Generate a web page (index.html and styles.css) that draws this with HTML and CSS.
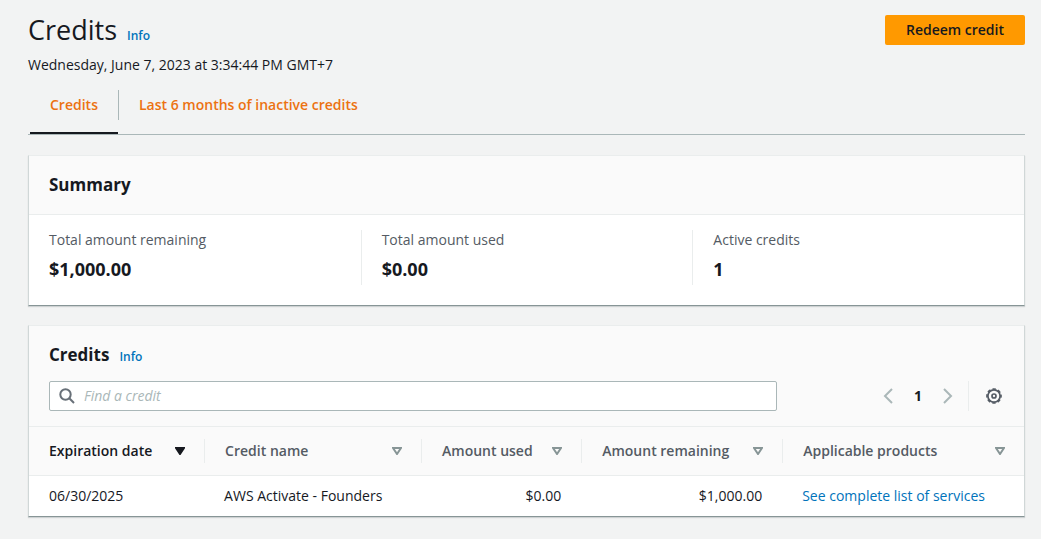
FILE: index.html
```
<!DOCTYPE html>
<html lang="en">
<head>
<meta charset="utf-8">
<title>Credits</title>
<link rel="stylesheet" href="styles.css">
</head>
<body>
<main class="page">
  <header class="page-header">
    <div class="page-heading">
      <h1 class="page-title">Credits</h1>
      <a class="info" href="#">Info</a>
    </div>
    <button class="primary" type="button">Redeem credit</button>
  </header>
  <p class="timestamp">Wednesday, June 7, 2023 at 3:34:44 PM GMT+7</p>

  <nav class="tabs">
    <a class="tab tab-active" href="#"><span class="tab-label">Credits</span></a>
    <a class="tab" href="#"><span class="tab-label">Last 6 months of inactive credits</span></a>
  </nav>

  <div class="cards">
  <section class="card">
    <div class="card-header summary-header">
      <h2 class="card-title">Summary</h2>
    </div>
    <dl class="stats">
      <div class="stat"><dt>Total amount remaining</dt><dd>$1,000.00</dd></div>
      <div class="stat"><dt>Total amount used</dt><dd>$0.00</dd></div>
      <div class="stat"><dt>Active credits</dt><dd>1</dd></div>
    </dl>
  </section>

  <section class="card">
    <div class="card-header">
      <div class="title-row">
        <h2 class="card-title">Credits</h2>
        <a class="info" href="#">Info</a>
      </div>
      <div class="toolbar">
        <label class="search">
          <svg width="16" height="16" viewBox="0 0 16 16" aria-hidden="true"><circle cx="6.500" cy="6.500" r="5.200"/><path d="M10.300 10.300L15 15"/></svg>
          <input type="search" placeholder="Find a credit" aria-label="Find a credit">
        </label>
        <div class="pager">
          <button class="arrow" type="button" aria-label="Previous page"><svg width="10" height="16" viewBox="0 0 10 16"><path d="M9 1L2 8l7 7"/></svg></button>
          <button class="page-number" type="button">1</button>
          <button class="arrow" type="button" aria-label="Next page"><svg width="10" height="16" viewBox="0 0 10 16"><path d="M1 1l7 7-7 7"/></svg></button>
        </div>
        <button class="settings" type="button" aria-label="Preferences"><svg width="16" height="16" viewBox="0 0 16 16"><circle cx="8" cy="8" r="6.100"/><circle cx="8" cy="8" r="7" stroke-dasharray="3.300 2.198" stroke-dashoffset="1.650"/><circle cx="8" cy="8" r="2"/></svg></button>
      </div>
    </div>
    <table class="credits">
      <colgroup><col class="c-date"><col class="c-name"><col class="c-used"><col class="c-left"><col></colgroup>
      <thead>
        <tr>
          <th class="sorted" scope="col"><div class="th">Expiration date<svg width="10" height="8" viewBox="0 0 10 8"><path d="M1 1h8L5 7z"/></svg></div></th>
          <th scope="col"><div class="th">Credit name<svg width="10" height="8" viewBox="0 0 10 8"><path d="M1 1h8L5 7z"/></svg></div></th>
          <th scope="col"><div class="th">Amount used<svg width="10" height="8" viewBox="0 0 10 8"><path d="M1 1h8L5 7z"/></svg></div></th>
          <th scope="col"><div class="th">Amount remaining<svg width="10" height="8" viewBox="0 0 10 8"><path d="M1 1h8L5 7z"/></svg></div></th>
          <th scope="col"><div class="th">Applicable products<svg width="10" height="8" viewBox="0 0 10 8"><path d="M1 1h8L5 7z"/></svg></div></th>
        </tr>
      </thead>
      <tbody>
        <tr>
          <td>06/30/2025</td>
          <td>AWS Activate - Founders</td>
          <td class="num">$0.00</td>
          <td class="num">$1,000.00</td>
          <td><a class="link" href="#">See complete list of services</a></td>
        </tr>
      </tbody>
    </table>
  </section>
  </div>
</main>
</body>
</html>
```
FILE: styles.css
```
* { box-sizing: border-box; }
body {
  margin: 0;
  background: #f2f3f3;
  color: #16191f;
  font: 14px/20px "Open Sans", "Noto Sans", sans-serif;
}
h1, h2, p, dl, dd { margin: 0; }
a { text-decoration: none; }
button { font: inherit; border: 0; background: none; padding: 0; }
svg { display: block; fill: none; stroke: currentColor; stroke-width: 2; flex: none; }

.page { padding: 12px 16px 16px 28px; }
.page-header { display: flex; align-items: center; justify-content: space-between; }
.page-heading { display: flex; align-items: baseline; gap: 10px; }
.page-title { font-size: 27px; line-height: 36px; font-weight: 400; }
.info { color: #0073bb; font-size: 12px; font-weight: 600; line-height: 16px; }
.primary {
  width: 140px;
  height: 30px;
  border-radius: 2px;
  background: #ff9900;
  color: #16191f;
  font-weight: 600;
}
.timestamp { margin-top: 7px; }

.tabs {
  display: flex;
  margin-top: 15px;
  padding-left: 2px;
  border-bottom: 1px solid #aab7b8;
}
.tab { padding-bottom: 12px; border-bottom: 2px solid transparent; color: #ec7211; font-weight: 600; }
.tab-label { display: block; padding: 5px 20px; }
.tab-active { border-bottom-color: #16191f; }
.tab + .tab .tab-label { border-left: 1px solid #aab7b8; }

.cards { display: grid; gap: 19px; margin-top: 20px; }
.card {
  background: #fff;
  border: 1px solid #eaeded;
  border-color: #eaeded #d0d7d7 #879596;
  box-shadow: 0 1px 1px rgba(0, 28, 36, 0.15);
}
.card-header { padding: 19px 20px 15px; background: #fafafa; border-bottom: 1px solid #eaeded; }
.summary-header { padding-bottom: 19px; }
.card-title { font-size: 17px; line-height: 20px; font-weight: 700; }
.title-row { display: flex; align-items: baseline; gap: 10px; }

.stats { display: grid; grid-template-columns: repeat(3, 1fr); padding: 15px 0 20px; }
.stat { padding: 0 20px; height: 55px; }
.stat + .stat { border-left: 1px solid #eaeded; }
.stat dt { color: #545b64; }
.stat dd { margin-top: 7px; font-size: 18px; line-height: 24px; font-weight: 700; }

.toolbar { display: flex; align-items: center; margin-top: 16px; }
.search {
  display: flex;
  align-items: center;
  gap: 9px;
  width: 76.2%;
  height: 30px;
  padding: 0 9px;
  background: #fff;
  border: 1px solid #aab7b8;
  border-radius: 2px;
  color: #687078;
}
.search input { flex: 1; min-width: 0; border: 0; padding: 0; outline: 0; background: none; font: inherit; }
.search input::placeholder { color: #aab7b8; font-style: italic; }
.pager { display: flex; align-items: center; gap: 21px; margin-left: auto; }
.arrow { color: #aab7b8; }
.page-number { font-weight: 700; color: #16191f; }
.settings { margin-left: 15px; padding: 7px 2px 7px 17px; border-left: 1px solid #eaeded; color: #545b64; }
.settings circle { stroke-width: 1.7; }

.credits { width: 100%; table-layout: fixed; border-collapse: collapse; }
.c-date { width: 17.6%; }
.c-name { width: 21.8%; }
.c-used { width: 16.1%; }
.c-left { width: 20.2%; }
th { padding: 12px 0; background: #fafafa; border-bottom: 1px solid #eaeded; color: #545b64; font-weight: 600; text-align: left; }
.sorted { color: #16191f; }
.sorted path { fill: currentColor; }
.th { display: flex; align-items: center; justify-content: space-between; height: 24px; padding: 0 19px 0 20px; white-space: nowrap; }
.th svg { color: #879596; }
.sorted svg { color: #16191f; }
th + th .th { border-left: 1px solid #eaeded; }
td { padding: 10px 20px; }
.num { text-align: right; }
.link { color: #0073bb; }
```
